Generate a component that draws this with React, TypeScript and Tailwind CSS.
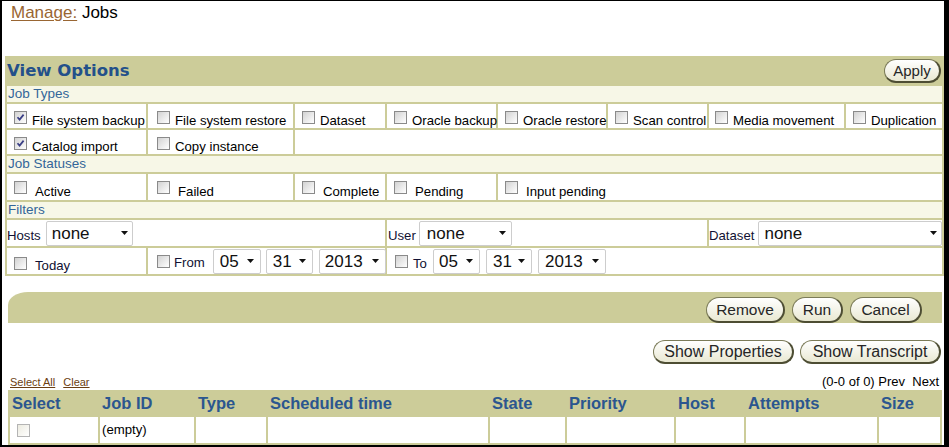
import React from "react";

function Box({ checked = false, disabled = false }: { checked?: boolean; disabled?: boolean }) {
  return (
    <span
      className={
        disabled
          ? "relative block w-[13px] h-[13px] shrink-0 border border-[#b4b4b4] bg-gradient-to-br from-[#ecebe0] to-white"
          : "relative block w-[13px] h-[13px] shrink-0 border border-[#8a8a8a] bg-gradient-to-br from-[#d2d2d2] to-white"
      }
    >
      {checked && (
        <svg className="absolute left-0 top-0" width="11" height="11" viewBox="0 0 11 11">
          <path d="M2.5 5.2 L4.6 7.6 L8.6 2.6" stroke="#3a3f86" strokeWidth="1.7" fill="none" />
        </svg>
      )}
    </span>
  );
}

function Sel({ value, className }: { value: string; className: string }) {
  return (
    <div
      className={`flex items-center justify-between h-[25px] border border-[#cdcdcd] rounded-[2px] bg-white text-[17px] text-[#111] shrink-0 ${className}`}
    >
      <span className="leading-none">{value}</span>
      <svg width="7" height="4" viewBox="0 0 7 4" className="shrink-0">
        <path d="M0 0 L7 0 L3.5 4 Z" fill="#111" />
      </svg>
    </div>
  );
}

function Btn({ children, className }: { children: React.ReactNode; className: string }) {
  return (
    <div
      className={`flex items-center justify-center rounded-full border border-[#7b7b58] border-b-[2px] border-r-[2px] border-b-[#4d4d33] border-r-[#4d4d33] bg-gradient-to-b from-white to-[#e9e8d2] text-[#262626] whitespace-nowrap leading-none ${className}`}
    >
      {children}
    </div>
  );
}

function TypeCell({ label, checked = false, className }: { label?: string; checked?: boolean; className: string }) {
  return (
    <div className={`flex items-end bg-white text-[13.2px] leading-[15px] text-black whitespace-nowrap ${className}`}>
      {label !== undefined && (
        <>
          <span className="mb-[4px]">
            <Box checked={checked} />
          </span>
          <span className="ml-[5px] mb-[0px]">{label}</span>
        </>
      )}
    </div>
  );
}

function StatCell({ label, className }: { label: string; className: string }) {
  return (
    <div className={`flex items-end bg-white text-[13.2px] leading-[15px] text-black whitespace-nowrap ${className}`}>
      <span className="mb-[6px]">
        <Box />
      </span>
      <span className="ml-[8px] mb-[1px]">{label}</span>
    </div>
  );
}

function SubHead({ children }: { children: React.ReactNode }) {
  return (
    <div className="h-[16px] bg-[#f7f7e7] text-[#336699] text-[13.5px] leading-[16px] pl-[1px]">{children}</div>
  );
}

export default function App() {
  const cols = ["w-[88px]", "w-[94px]", "w-[70px]", "w-[220px]", "w-[75px]", "w-[107px]", "w-[68px]", "w-[131px]", "flex-1"];
  const heads = ["Select", "Job ID", "Type", "Scheduled time", "State", "Priority", "Host", "Attempts", "Size"];
  return (
    <div className="w-[949px] h-[447px] overflow-hidden box-border border-t border-l-2 border-r-[5px] border-b-2 border-black bg-white font-['Liberation_Sans',Arial,sans-serif]">
      <div className="pl-[3px]">
        {/* Title */}
        <div className="pt-[2px] pl-[6px] h-[22px] text-[17px] leading-[20px] text-black">
          <a className="text-[#996633] underline underline-offset-[2px]">Manage:</a> Jobs
        </div>

        {/* View Options */}
        <div className="mt-[33px] bg-[#cccc99] px-[2px] pb-[2px]">
          <div className="h-[30px] flex items-center justify-between pr-[1px]">
            <span className="font-['DejaVu_Sans',Verdana,sans-serif] font-bold text-[16.5px] text-[#23508a] pt-[1px]">
              View Options
            </span>
            <Btn className="w-[57px] h-[24px] text-[15px]">Apply</Btn>
          </div>
          <div className="flex flex-col gap-[2px]">
            <SubHead>Job Types</SubHead>
            <div className="flex gap-[2px] h-[24px]">
              <TypeCell className="w-[139px] pl-[7px]" checked label="File system backup" />
              <TypeCell className="w-[145px] pl-[9px]" label="File system restore" />
              <TypeCell className="w-[90px] pl-[7px]" label="Dataset" />
              <TypeCell className="w-[109px] pl-[7px]" label="Oracle backup" />
              <TypeCell className="w-[108px] pl-[7px]" label="Oracle restore" />
              <TypeCell className="w-[99px] pl-[7px]" label="Scan control" />
              <TypeCell className="w-[135px] pl-[6px]" label="Media movement" />
              <TypeCell className="flex-1 pl-[7px]" label="Duplication" />
            </div>
            <div className="flex gap-[2px] h-[24px]">
              <TypeCell className="w-[139px] pl-[7px]" checked label="Catalog import" />
              <TypeCell className="w-[145px] pl-[9px]" label="Copy instance" />
              <TypeCell className="flex-1" />
            </div>
            <SubHead>Job Statuses</SubHead>
            <div className="flex gap-[2px] h-[26px]">
              <StatCell className="w-[139px] pl-[7px]" label="Active" />
              <StatCell className="w-[145px] pl-[9px]" label="Failed" />
              <StatCell className="w-[90px] pl-[7px]" label="Complete" />
              <StatCell className="w-[109px] pl-[7px]" label="Pending" />
              <StatCell className="flex-1 pl-[7px]" label="Input pending" />
            </div>
            <SubHead>Filters</SubHead>
            <div className="flex gap-[2px] h-[26px] text-[13.2px] text-[#111133]">
              <div className="w-[378px] bg-white flex items-center">
                <span className="pt-[5px]">Hosts</span>
                <Sel value="none" className="ml-[5px] w-[87px] pl-[5px] pr-[4px]" />
              </div>
              <div className="w-[320px] bg-white flex items-center pl-[1px]">
                <span className="pt-[5px]">User</span>
                <Sel value="none" className="ml-[3px] w-[93px] pl-[7px] pr-[5px]" />
              </div>
              <div className="flex-1 bg-white flex items-center">
                <span className="pt-[5px]">Dataset</span>
                <Sel value="none" className="ml-[4px] flex-1 pl-[5px] pr-[4px]" />
              </div>
            </div>
            <div className="flex gap-[2px] h-[26px] text-[13.2px] text-[#111133]">
              <div className="w-[139px] bg-white flex items-center pl-[7px]">
                <span className="translate-y-[2px]">
                  <Box />
                </span>
                <span className="ml-[8px] pt-[10px]">Today</span>
              </div>
              <div className="w-[237px] bg-white flex items-center pl-[9px]">
                <span>
                  <Box />
                </span>
                <span className="ml-[4px] pt-[4px]">From</span>
                <Sel value="05" className="ml-[8px] w-[48px] pl-[6px] pr-[6px]" />
                <Sel value="31" className="ml-[5px] w-[47px] pl-[6px] pr-[6px]" />
                <Sel value="2013" className="ml-[6px] w-[67px] pl-[5px] pr-[6px]" />
              </div>
              <div className="flex-1 bg-white flex items-center pl-[8px]">
                <span>
                  <Box />
                </span>
                <span className="ml-[5px] pt-[5px]">To</span>
                <Sel value="05" className="ml-[6px] w-[47px] pl-[5px] pr-[6px]" />
                <Sel value="31" className="ml-[6px] w-[46px] pl-[6px] pr-[6px]" />
                <Sel value="2013" className="ml-[6px] w-[68px] pl-[6px] pr-[6px]" />
              </div>
            </div>
          </div>
        </div>

        {/* Action bar */}
        <div className="mt-[16px] ml-[3px] mr-[2px] h-[31px] bg-[#cccc99] rounded-tl-[20px_13px] flex items-end justify-end pr-[20px] gap-[7px]">
          <Btn className="w-[79px] h-[26px] text-[15.5px]">Remove</Btn>
          <Btn className="w-[51px] h-[26px] text-[15.5px]">Run</Btn>
          <Btn className="w-[72px] h-[26px] text-[15.5px]">Cancel</Btn>
        </div>

        {/* Show buttons */}
        <div className="mt-[17px] flex justify-end gap-[6px] pr-[3px]">
          <Btn className="w-[141px] h-[24px] text-[16px]">Show Properties</Btn>
          <Btn className="w-[141px] h-[24px] text-[16px]">Show Transcript</Btn>
        </div>

        {/* Select all / pagination */}
        <div className="mt-[8px] h-[18px] flex items-baseline justify-between pl-[5px] pr-[5px]">
          <div className="text-[11px] text-[#6b3e12] flex gap-[8px]">
            <a className="underline">Select All</a>
            <a className="underline">Clear</a>
          </div>
          <div className="text-[13px] text-black whitespace-pre">(0-0 of 0) Prev  Next</div>
        </div>

        {/* Results table */}
        <div className="ml-[3px] mr-[2px] bg-[#cccc99] px-[2px] pb-[2px]">
          <div className="flex gap-[2px] h-[27px] items-center">
            {heads.map((h, i) => (
              <div
                key={h}
                className={`${cols[i]} pl-[2px] font-bold text-[16.5px] text-[#2b568f] whitespace-nowrap`}
              >
                {h}
              </div>
            ))}
          </div>
          <div className="flex gap-[2px] h-[26px]">
            {cols.map((c, i) => (
              <div key={i} className={`${c} bg-white flex items-center text-[13.2px] text-black`}>
                {i === 0 && (
                  <span className="ml-[7px]">
                    <Box disabled />
                  </span>
                )}
                {i === 1 && <span className="pl-[2px]">(empty)</span>}
              </div>
            ))}
          </div>
        </div>
      </div>
    </div>
  );
}
